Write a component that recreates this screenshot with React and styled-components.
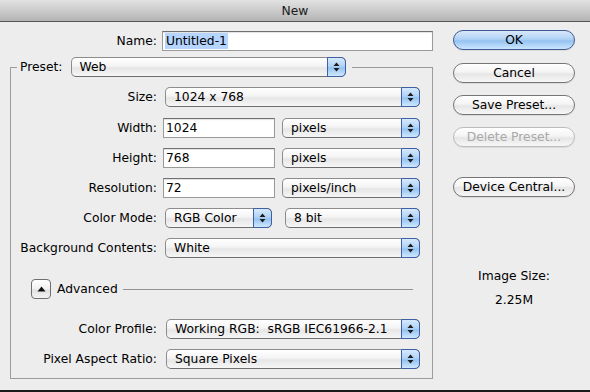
import React from 'react';
import styled, { createGlobalStyle } from 'styled-components';

const GlobalStyle = createGlobalStyle`
  html, body {
    margin: 0;
    padding: 0;
    background: #1b1b1b;
  }
  * {
    box-sizing: border-box;
  }
`;

const font = `'DejaVu Sans', 'Liberation Sans', sans-serif`;

const Window = styled.div`
  width: 590px;
  height: 390px;
  background: #ededed;
  font-family: ${font};
  font-size: 12.3px;
  color: #000;
  display: flex;
  flex-direction: column;
`;

const TitleBar = styled.div`
  height: 22px;
  flex: none;
  display: flex;
  align-items: center;
  justify-content: center;
  background: linear-gradient(#e2e2e2, #b4b4b4);
  border-bottom: 1px solid #555;
  color: #1a1a1a;
`;

const Body = styled.div`
  display: flex;
  flex: 1;
`;

const Main = styled.div`
  width: 433px;
  padding: 9px 0 0 10px;
`;

const NameRow = styled.div`
  display: flex;
  align-items: center;
  height: 20px;
  margin-bottom: 6px;
`;

const Label = styled.label`
  width: ${(p) => p.$w || 140}px;
  flex: none;
  text-align: right;
  white-space: nowrap;
  margin-right: ${(p) => p.$gap || 6}px;
`;

const TextField = styled.div`
  width: ${(p) => p.$w}px;
  height: 20px;
  flex: none;
  background: #fff;
  border: 1px solid #9a9a9a;
  border-top-color: #707070;
  box-shadow: inset 0 1px 1px rgba(0, 0, 0, 0.12);
  display: flex;
  align-items: center;
  padding-left: 2px;
  margin-right: ${(p) => p.$mr || 0}px;
`;

const Selected = styled.span`
  background: #b5d5ff;
  padding: 1px 1px;
`;

const Popup = styled.div`
  width: ${(p) => (p.$w ? `${p.$w}px` : 'auto')};
  flex: ${(p) => (p.$w ? 'none' : '1')};
  height: 20px;
  margin-left: ${(p) => p.$ml || 0}px;
  margin-right: ${(p) => p.$mr || 0}px;
  display: flex;
  align-items: stretch;
  border: 1px solid #8c8c8c;
  border-bottom-color: #6e6e6e;
  border-radius: 5px;
  background: linear-gradient(#ffffff 0%, #f4f4f4 45%, #e6e6e6 55%, #f6f6f6 100%);
`;

const PopupValue = styled.span`
  flex: 1;
  display: flex;
  align-items: center;
  padding-left: 8px;
  white-space: pre;
  overflow: hidden;
`;

const Stepper = styled.span`
  width: 19px;
  flex: none;
  margin: -1px -1px -1px 0;
  border: 1px solid #3f5fa6;
  border-radius: 0 5px 5px 0;
  background: linear-gradient(#d6e9fc 0%, #b1d3f6 45%, #95c3f1 55%, #cfe8ff 100%);
  display: flex;
  align-items: center;
  justify-content: center;
`;

const Arrows = () => (
  <svg width="7" height="10" viewBox="0 0 7 10">
    <polygon points="0.5,4 3.5,0.5 6.5,4" fill="#1c1c1c" />
    <polygon points="0.5,6 3.5,9.5 6.5,6" fill="#1c1c1c" />
  </svg>
);

const Select = ({ value, w, ml, mr }) => (
  <Popup $w={w} $ml={ml} $mr={mr}>
    <PopupValue>{value}</PopupValue>
    <Stepper>
      <Arrows />
    </Stepper>
  </Popup>
);

const Group = styled.fieldset`
  width: 423px;
  margin: 0;
  padding: 10px 12px 9px 6px;
  border: 1px solid #9c9c9c;
  min-width: 0;
`;

const Legend = styled.legend`
  display: flex;
  align-items: center;
  padding: 0 6px 0 3px;
  height: 20px;
`;

const LegendLabel = styled.span`
  margin-right: 8px;
`;

const Rows = styled.div`
  display: flex;
  flex-direction: column;
  gap: 10px;
`;

const Row = styled.div`
  display: flex;
  align-items: center;
  height: 20px;
  margin-top: ${(p) => p.$mt || 0}px;
`;

const AdvancedRow = styled.div`
  display: flex;
  align-items: center;
  height: 20px;
  margin: 21px 0 20px 14px;
`;

const Disclosure = styled.div`
  width: 20px;
  height: 20px;
  flex: none;
  border: 1px solid #6f6f6f;
  border-radius: 4px;
  background: linear-gradient(#ffffff 0%, #f1f1f1 50%, #e1e1e1 55%, #f3f3f3 100%);
  display: flex;
  align-items: center;
  justify-content: center;
  margin-right: 6px;
`;

const Rule = styled.div`
  flex: 1;
  height: 1px;
  background: #939393;
  margin: 1px 7px 0 5px;
`;

const Side = styled.div`
  width: 157px;
  padding: 8px 0 0 20px;
  display: flex;
  flex-direction: column;
`;

const PushButton = styled.div`
  width: 122px;
  height: 20px;
  margin-bottom: ${(p) => p.$mb}px;
  border-radius: 10px;
  display: flex;
  align-items: center;
  justify-content: center;
  border: 1px solid ${(p) => (p.$default ? '#3f5894' : p.$disabled ? '#bcbcbc' : '#757575')};
  color: ${(p) => (p.$disabled ? '#a9a9a9' : '#000')};
  background: ${(p) =>
    p.$default
      ? 'linear-gradient(#d8e8f9 0%, #b0d2f5 45%, #94c2f1 55%, #cde7ff 100%)'
      : 'linear-gradient(#ffffff 0%, #f4f4f4 45%, #e6e6e6 55%, #f7f7f7 100%)'};
  box-shadow: 0 1px 1px rgba(0, 0, 0, 0.08);
`;

const ImageSize = styled.div`
  width: 122px;
  margin-top: 71px;
  display: flex;
  flex-direction: column;
  align-items: center;
  gap: 8px;
  line-height: 16px;
`;

export default function App() {
  return (
    <Window>
      <GlobalStyle />
      <TitleBar>New</TitleBar>
      <Body>
        <Main>
          <NameRow>
            <Label $w={147} $gap={5}>Name:</Label>
            <TextField $w={271}>
              <Selected>Untitled-1</Selected>
            </TextField>
          </NameRow>
          <Group>
            <Legend>
              <LegendLabel>Preset:</LegendLabel>
              <Select value="Web" w={275} />
            </Legend>
            <Rows>
              <Row>
                <Label>Size:</Label>
                <Select value="1024 x 768" ml={2} />
              </Row>
              <Row $mt={1}>
                <Label>Width:</Label>
                <TextField $w={112} $mr={7}>1024</TextField>
                <Select value="pixels" />
              </Row>
              <Row>
                <Label>Height:</Label>
                <TextField $w={112} $mr={7}>768</TextField>
                <Select value="pixels" />
              </Row>
              <Row>
                <Label>Resolution:</Label>
                <TextField $w={112} $mr={7}>72</TextField>
                <Select value="pixels/inch" />
              </Row>
              <Row>
                <Label>Color Mode:</Label>
                <Select value="RGB Color" w={107} ml={2} mr={13} />
                <Select value="8 bit" />
              </Row>
              <Row>
                <Label>Background Contents:</Label>
                <Select value="White" ml={2} />
              </Row>
            </Rows>
            <AdvancedRow>
              <Disclosure>
                <svg width="9" height="6" viewBox="0 0 9 6">
                  <polygon points="0.5,5.5 4.5,0.5 8.5,5.5" fill="#111" />
                </svg>
              </Disclosure>
              Advanced
              <Rule />
            </AdvancedRow>
            <Rows>
              <Row>
                <Label>Color Profile:</Label>
                <Select value="Working RGB:  sRGB IEC61966-2.1" ml={3} />
              </Row>
              <Row>
                <Label>Pixel Aspect Ratio:</Label>
                <Select value="Square Pixels" ml={3} />
              </Row>
            </Rows>
          </Group>
        </Main>
        <Side>
          <PushButton $default $mb={13}>OK</PushButton>
          <PushButton $mb={12}>Cancel</PushButton>
          <PushButton $mb={12}>Save Preset...</PushButton>
          <PushButton $disabled $mb={30}>Delete Preset...</PushButton>
          <PushButton $mb={0}>Device Central...</PushButton>
          <ImageSize>
            <span>Image Size:</span>
            <span>2.25M</span>
          </ImageSize>
        </Side>
      </Body>
    </Window>
  );
}
